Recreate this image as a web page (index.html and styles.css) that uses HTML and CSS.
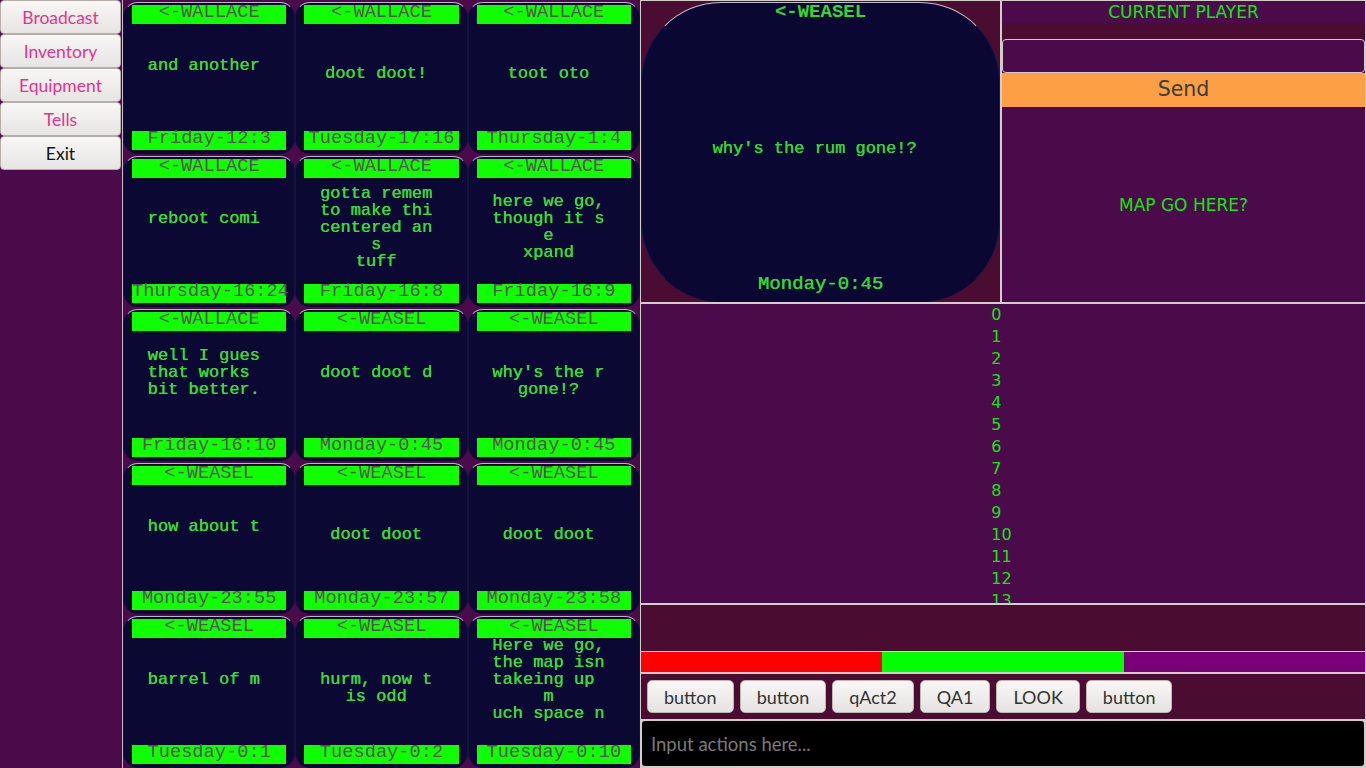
FILE: index.html
```html
<!DOCTYPE html>
<html>
<head>
<meta charset="utf-8">
<title>Chat board</title>
<link rel="stylesheet" href="styles.css">
</head>
<body>
<nav class="sidebar">
  <button class="side-btn">Broadcast</button>
  <button class="side-btn">Inventory</button>
  <button class="side-btn">Equipment</button>
  <button class="side-btn">Tells</button>
  <button class="side-btn exit">Exit</button>
</nav>

<section class="board">
  <div class="card"><div class="tag">&lt;-WALLACE</div><div class="msg">and another&#10; </div><div class="tag">Friday-12:3</div></div>
  <div class="card"><div class="tag">&lt;-WALLACE</div><div class="msg">doot doot!</div><div class="tag">Tuesday-17:16</div></div>
  <div class="card"><div class="tag">&lt;-WALLACE</div><div class="msg">toot oto</div><div class="tag">Thursday-1:4</div></div>

  <div class="card"><div class="tag">&lt;-WALLACE</div><div class="msg">reboot comi&#10; </div><div class="tag">Thursday-16:24</div></div>
  <div class="card"><div class="tag">&lt;-WALLACE</div><div class="msg">gotta remem&#10;to make thi&#10;centered an&#10;s&#10;tuff</div><div class="tag">Friday-16:8</div></div>
  <div class="card"><div class="tag">&lt;-WALLACE</div><div class="msg">here we go,&#10;though it s&#10;e&#10;xpand</div><div class="tag">Friday-16:9</div></div>

  <div class="card"><div class="tag">&lt;-WALLACE</div><div class="msg">well I gues&#10;that works &#10;bit better.&#10; </div><div class="tag">Friday-16:10</div></div>
  <div class="card"><div class="tag">&lt;-WEASEL</div><div class="msg">doot doot d&#10; </div><div class="tag">Monday-0:45</div></div>
  <div class="card"><div class="tag">&lt;-WEASEL</div><div class="msg">why's the r&#10;gone!?</div><div class="tag">Monday-0:45</div></div>

  <div class="card"><div class="tag">&lt;-WEASEL</div><div class="msg">how about t&#10; </div><div class="tag">Monday-23:55</div></div>
  <div class="card"><div class="tag">&lt;-WEASEL</div><div class="msg">doot doot</div><div class="tag">Monday-23:57</div></div>
  <div class="card"><div class="tag">&lt;-WEASEL</div><div class="msg">doot doot</div><div class="tag">Monday-23:58</div></div>

  <div class="card"><div class="tag">&lt;-WEASEL</div><div class="msg">barrel of m&#10; </div><div class="tag">Tuesday-0:1</div></div>
  <div class="card"><div class="tag">&lt;-WEASEL</div><div class="msg">hurm, now t&#10;is odd</div><div class="tag">Tuesday-0:2</div></div>
  <div class="card"><div class="tag">&lt;-WEASEL</div><div class="msg msg-tall">Here we go,&#10;the map isn&#10;takeing up &#10;m&#10;uch space n</div><div class="tag">Tuesday-0:10</div></div>
</section>

<main class="main">
  <div class="top-row">
    <div class="stage">
      <div class="big-card">
        <div class="big-line big-from">&lt;-WEASEL</div>
        <div class="big-text">why's the rum gone!?</div>
        <div class="big-line">Monday-0:45</div>
      </div>
    </div>
    <div class="side-panel">
      <div class="player-label">CURRENT PLAYER</div>
      <div class="player-gap"></div>
      <input class="player-input" type="text">
      <button class="send">Send</button>
      <div class="map">MAP GO HERE?</div>
    </div>
  </div>

  <div class="log">
    <div class="log-list">
      <div>0</div><div>1</div><div>2</div><div>3</div><div>4</div><div>5</div><div>6</div>
      <div>7</div><div>8</div><div>9</div><div>10</div><div>11</div><div>12</div><div>13</div>
    </div>
  </div>

  <div class="notes"></div>

  <div class="bar">
    <div class="seg red"></div>
    <div class="seg green"></div>
    <div class="seg violet"></div>
  </div>

  <div class="actions">
    <button class="act">button</button>
    <button class="act">button</button>
    <button class="act">qAct2</button>
    <button class="act">QA1</button>
    <button class="act">LOOK</button>
    <button class="act">button</button>
  </div>

  <div class="cmd-wrap">
    <input class="cmd" type="text" placeholder="Input actions here...">
  </div>
</main>
</body>
</html>
```
FILE: styles.css
```css
* { box-sizing: border-box; }

html, body { margin: 0; padding: 0; }

body {
  width: 1366px;
  height: 768px;
  overflow: hidden;
  display: flex;
  background: #4b0b4b;
  font-family: Lato, "Noto Sans", sans-serif;
}

/* ---------- sidebar ---------- */
.sidebar {
  width: 122px;
  flex: none;
  display: flex;
  flex-direction: column;
  padding-right: 1px;
  background: #4b0b4b;
}

.side-btn {
  height: 34px;
  margin: 0;
  padding: 0;
  display: flex;
  align-items: center;
  justify-content: center;
  border: 1px solid #b5aea8;
  border-radius: 4px;
  background: linear-gradient(#f8f7f6, #e7e5e3);
  color: #e6338d;
  font-family: Lato, "Noto Sans", sans-serif;
  font-size: 17.5px;
}

.side-btn.exit { color: #111; }

/* ---------- message board ---------- */
.board {
  width: 518px;
  height: 768px;
  flex: none;
  border-left: 1px solid #c9b6c6;
  display: grid;
  grid-template-columns: repeat(3, 1fr);
  grid-template-rows: repeat(5, 1fr);
  background: #4b0b4b;
}

.card {
  margin-top: 2px;
  min-height: 0;
  min-width: 0;
  border: 1px solid;
  border-color: #bab6c8 #14123e #0b0933 #14123e;
  border-radius: 15px;
  background: #0b0933;
  padding: 2px 8px 3px;
  display: flex;
  flex-direction: column;
  font-family: "Liberation Mono", monospace;
}

.tag {
  height: 19px;
  flex: none;
  background: #10ff00;
  color: #555;
  font-size: 18.7px;
  line-height: 14px;
  text-align: center;
  white-space: nowrap;
}

.msg {
  flex: 1;
  min-height: 0;
  display: flex;
  align-items: center;
  justify-content: center;
  padding: 0 11px 7px 0;
  white-space: pre;
  text-align: center;
  font-size: 17px;
  line-height: 17px;
  color: #36dc36;
  text-shadow: 0.4px 0 0 #36dc36;
}

.msg-tall { padding-bottom: 24px; }

/* ---------- right side ---------- */
.main {
  flex: 1;
  height: 768px;
  display: flex;
  flex-direction: column;
  border-left: 1px solid #d3cdc9;
  border-right: 1px solid #d3cdc9;
  border-top: 1px solid #d3cdc9;
  background: #d3cdc9;
}

.top-row {
  height: 301px;
  flex: none;
  display: flex;
}

.stage {
  width: 359px;
  flex: none;
  padding-top: 1px;
  display: flex;
  background: #4b0c31;
}

.big-card {
  flex: 1;
  display: flex;
  flex-direction: column;
  border: 1px solid;
  border-color: #c2bece #1c1848 #0a0833 #1c1848;
  border-radius: 80px;
  background: #0a0833;
  padding-bottom: 7px;
  font-family: "Liberation Mono", monospace;
  color: #30d830;
  text-align: center;
}

.big-line {
  flex: none;
  font-size: 19px;
  line-height: 19px;
  white-space: nowrap;
  text-shadow: 0.4px 0 0 #30d830;
}

.big-from { font-weight: bold; text-shadow: none; }

.big-text {
  flex: 1;
  display: flex;
  align-items: center;
  justify-content: center;
  padding-right: 12px;
  font-size: 17px;
  line-height: 17px;
  text-shadow: 0.4px 0 0 #30d830;
}

.side-panel {
  flex: 1;
  display: flex;
  flex-direction: column;
  border-left: 2px solid #d3cdc9;
  background: #4b0b4b;
}

.player-label {
  height: 22px;
  flex: none;
  text-align: center;
  font-family: "DejaVu Sans", sans-serif;
  font-size: 17px;
  line-height: 22px;
  color: #10e610;
  background: #4b0b4b;
}

.player-gap {
  height: 16px;
  flex: none;
  background: #4b0c31;
}

.player-input {
  height: 34px;
  flex: none;
  width: 100%;
  margin: 0;
  border: 1px solid #d0cac6;
  border-radius: 4px;
  background: #4b0b4b;
  outline: none;
}

.send {
  height: 34px;
  flex: none;
  margin: 0;
  border: none;
  padding: 0 0 3px;
  background: #fd9f45;
  color: #3b3b3b;
  font-family: "DejaVu Sans", sans-serif;
  font-size: 20.5px;
}

.map {
  flex: 1;
  display: flex;
  align-items: center;
  justify-content: center;
  font-family: "DejaVu Sans", sans-serif;
  font-size: 17px;
  color: #10e610;
}

.log {
  height: 301px;
  flex: none;
  border-top: 2px solid #d3cdc9;
  background: #4b0b4b;
  overflow: hidden;
  display: flex;
  justify-content: center;
}

.log-list {
  font-family: "DejaVu Sans", sans-serif;
  font-size: 16px;
  line-height: 22px;
  color: #10e610;
  padding-right: 3px;
}

.notes {
  height: 48px;
  flex: none;
  border-top: 2px solid #d3cdc9;
  background: #4b0c31;
}

.bar {
  height: 21px;
  flex: none;
  display: flex;
  border-top: 1px solid #d3cdc9;
}

.seg { flex: 1; }
.seg.red { background: #ff0000; }
.seg.green { background: #00ff00; }
.seg.violet { background: #7a0077; }

.actions {
  height: 47px;
  flex: none;
  border-top: 2px solid #d3cdc9;
  background: #4b0c31;
  display: flex;
  align-items: center;
  gap: 6px;
  padding-left: 6px;
}

.act {
  height: 33px;
  margin: 0;
  padding: 0 16px;
  border: 1px solid #bdb6b1;
  border-radius: 5px;
  background: linear-gradient(#f8f7f6, #e5e3e1);
  color: #333;
  font-family: Lato, "Noto Sans", sans-serif;
  font-size: 18px;
}

.cmd-wrap {
  height: 49px;
  flex: none;
  border-top: 2px solid #d3cdc9;
  padding: 0 1px 2px 1px;
  background: #d3cdc9;
}

.cmd {
  width: 100%;
  height: 45px;
  margin: 0;
  border: none;
  border-radius: 3px;
  background: #000;
  padding: 0 0 0 9px;
  color: #ddd;
  font-family: Lato, "Noto Sans", sans-serif;
  font-size: 18.5px;
  outline: none;
}

.cmd::placeholder { color: #7a7a7a; opacity: 1; }
```
